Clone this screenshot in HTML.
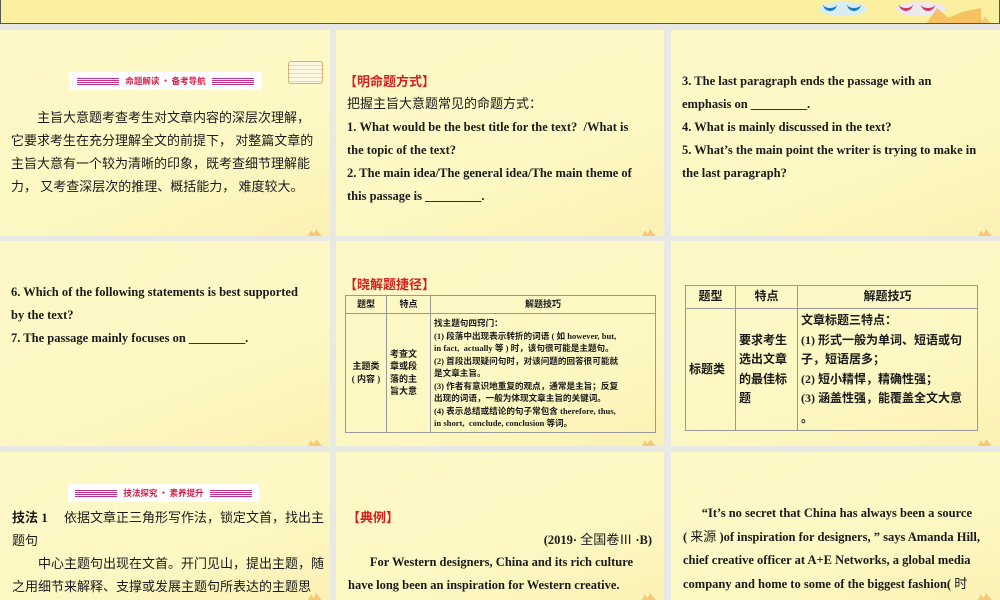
<!DOCTYPE html>
<html><head><meta charset="utf-8"><style>
*{margin:0;padding:0;box-sizing:border-box}
body{width:1000px;height:600px;background:#e8e8e4;position:relative;overflow:hidden;font-family:"Liberation Serif","Noto Serif CJK SC",serif;font-weight:bold;color:#1a1a1a}
.p{position:absolute;background:linear-gradient(160deg,#fdf9c6 0%,#fdf8c4 60%,#fbf1b4 100%);overflow:hidden}
.p:after{content:"";position:absolute;right:8px;bottom:0;width:14px;height:7px;background:#f4b860;clip-path:polygon(0 100%,20% 20%,40% 70%,60% 0,80% 60%,100% 100%);opacity:.7}
.t{position:absolute;font-size:12.5px;line-height:23px;white-space:nowrap}
.cn{font-family:"Liberation Serif","Noto Sans CJK SC",sans-serif;font-weight:normal;font-size:13px}
.red{color:#d42020;font-family:"Noto Sans CJK SC",sans-serif;font-weight:bold;font-size:13px}
.ban{position:absolute;height:18px;background:#fff;display:flex;align-items:center;justify-content:center;font-family:"Noto Sans CJK SC",sans-serif;font-size:8.5px;color:#d0204a;font-weight:bold}
.ban i{display:inline-block;width:42px;height:9px;margin:0 6px;background:repeating-linear-gradient(#fff 0 1px,#c03090 1px 2px)}
table{position:absolute;border-collapse:collapse;font-family:"Liberation Serif","Noto Sans CJK SC",sans-serif}
td{border:1px solid #999;vertical-align:middle}
</style></head><body>
<div class="p" style="left:0;top:0;width:1000px;height:24px;border-bottom:1.5px solid #555;border-left:1px solid #555;border-right:1px solid #555;background:#fbf0a0">
<div style="position:absolute;left:818px;top:2px;width:48px;height:14px;border-radius:50%;background:#d8ecf4"></div>
<div style="position:absolute;left:822px;top:4px;width:14px;height:7px;border-bottom:3px solid #1a80c0;border-radius:0 0 8px 8px"></div>
<div style="position:absolute;left:846px;top:4px;width:14px;height:7px;border-bottom:3px solid #1a80c0;border-radius:0 0 8px 8px"></div>
<div style="position:absolute;left:895px;top:2px;width:50px;height:14px;border-radius:50%;background:#f0e8f0"></div>
<div style="position:absolute;left:898px;top:4px;width:14px;height:7px;border-bottom:3px solid #d04060;border-radius:0 0 8px 8px"></div>
<div style="position:absolute;left:920px;top:4px;width:14px;height:7px;border-bottom:3px solid #d04060;border-radius:0 0 8px 8px"></div>
<div style="position:absolute;left:925px;top:8px;width:55px;height:16px;background:#f5b850;opacity:.8;clip-path:polygon(0 100%,20% 0,40% 60%,70% 20%,100% 0,100% 100%)"></div>
</div>

<div class="p" style="left:0;top:30px;width:330px;height:206px">
<div class="ban" style="left:69px;top:42px;width:193px"><i></i>命题解读 · 备考导航<i></i></div>
<div style="position:absolute;left:288px;top:31px;width:35px;height:23px;border:1px solid #d8b070;border-radius:3px;background:repeating-linear-gradient(#fdf6e0 0 3px,#e8d8c0 3px 4px)"></div>
<div class="t cn" style="left:11px;top:76px;">　　主旨大意题考查考生对文章内容的深层次理解，<br>它要求考生在充分理解全文的前提下， 对整篇文章的<br>主旨大意有一个较为清晰的印象，既考查细节理解能<br>力， 又考查深层次的推理、概括能力， 难度较大。</div>
</div>

<div class="p" style="left:336px;top:30px;width:328px;height:206px">
<div class="t red" style="left:8px;top:39px">【明命题方式】</div>
<div class="t" style="left:11px;top:62px"><span class="cn">把握主旨大意题常见的命题方式：</span><br>1. What would be the best title for the text?&nbsp; /What is<br>the topic of the text?<br>2. The main idea/The general idea/The main theme of<br>this passage is _________.</div>
</div>

<div class="p" style="left:671px;top:30px;width:329px;height:206px">
<div class="t" style="left:11px;top:40px">3. The last paragraph ends the passage with an<br>emphasis on _________.<br>4. What is mainly discussed in the text?<br>5. What’s the main point the writer is trying to make in<br>the last paragraph?</div>
</div>

<div class="p" style="left:0;top:241px;width:330px;height:205px">
<div class="t" style="left:11px;top:40px">6. Which of the following statements is best supported<br>by the text?<br>7. The passage mainly focuses on _________.</div>
</div>

<div class="p" style="left:336px;top:241px;width:328px;height:205px">
<div class="t red" style="left:8px;top:31px">【晓解题捷径】</div>
<table style="left:9px;top:54px;width:311px;font-size:9px;line-height:12.5px">
<tr style="height:18px"><td style="width:41px;text-align:center">题型</td><td style="width:44px;text-align:center">特点</td><td style="text-align:center">解题技巧</td></tr>
<tr><td style="text-align:center">主题类<br>( 内容 )</td><td style="padding-left:3px">考查文<br>章或段<br>落的主<br>旨大意</td><td style="padding:3px 2px 2px 3px;font-size:8.6px">找主题句四窍门：<br>(1) 段落中出现表示转折的词语 ( 如 however, but,<br>in fact,&nbsp; actually 等 ) 时，该句很可能是主题句。<br>(2) 首段出现疑问句时，对该问题的回答很可能就<br>是文章主旨。<br>(3) 作者有意识地重复的观点，通常是主旨；反复<br>出现的词语，一般为体现文章主旨的关键词。<br>(4) 表示总结或结论的句子常包含 therefore, thus,<br>in short,&nbsp; conclude, conclusion 等词。</td></tr>
</table>
</div>

<div class="p" style="left:671px;top:241px;width:329px;height:205px">
<table style="left:14px;top:44px;width:293px;font-size:12px;line-height:19.5px">
<tr style="height:23px"><td style="width:50px;text-align:center">题型</td><td style="width:62px;text-align:center">特点</td><td style="text-align:center">解题技巧</td></tr>
<tr><td style="padding-left:3px">标题类</td><td style="padding-left:3px">要求考生<br>选出文章<br>的最佳标<br>题</td><td style="padding:2px 3px">文章标题三特点：<br>(1) 形式一般为单词、短语或句<br>子，短语居多；<br>(2) 短小精悍，精确性强；<br>(3) 涵盖性强，能覆盖全文大意<br>。</td></tr>
</table>
</div>

<div class="p" style="left:0;top:452px;width:330px;height:148px">
<div class="ban" style="left:68px;top:32px;width:191px"><i></i>技法探究 · 素养提升<i></i></div>
<div class="t cn" style="left:12px;top:54px"><b style="font-family:'Liberation Serif','Noto Sans CJK SC',serif">技法 1</b>　 依据文章正三角形写作法，锁定文首，找出主<br>题句<br>　　中心主题句出现在文首。开门见山，提出主题，随<br>之用细节来解释、支撑或发展主题句所表达的主题思<br>想。这是英语中最常见的演绎法写作方式，即由一般到</div>
</div>

<div class="p" style="left:336px;top:452px;width:328px;height:148px">
<div class="t red" style="left:11px;top:53px">【典例】</div>
<div class="t" style="right:12px;top:76px">(2019· <span class="cn">全国卷Ⅲ</span> ·B)</div>
<div class="t" style="left:12px;top:99px">&nbsp;&nbsp;&nbsp;&nbsp;&nbsp;&nbsp; For Western designers, China and its rich culture<br>have long been an inspiration for Western creative.</div>
</div>

<div class="p" style="left:671px;top:452px;width:329px;height:148px">
<div class="t" style="left:12px;top:50px">&nbsp;&nbsp;&nbsp;&nbsp;&nbsp;&nbsp;“It’s no secret that China has always been a source<br>( <span class="cn">来源</span> )of inspiration for designers, ” says Amanda Hill,<br>chief creative officer at A+E Networks, a global media<br>company and home to some of the biggest fashion( <span class="cn">时</span><br><span class="cn">尚</span></div>
</div>
</body></html>
